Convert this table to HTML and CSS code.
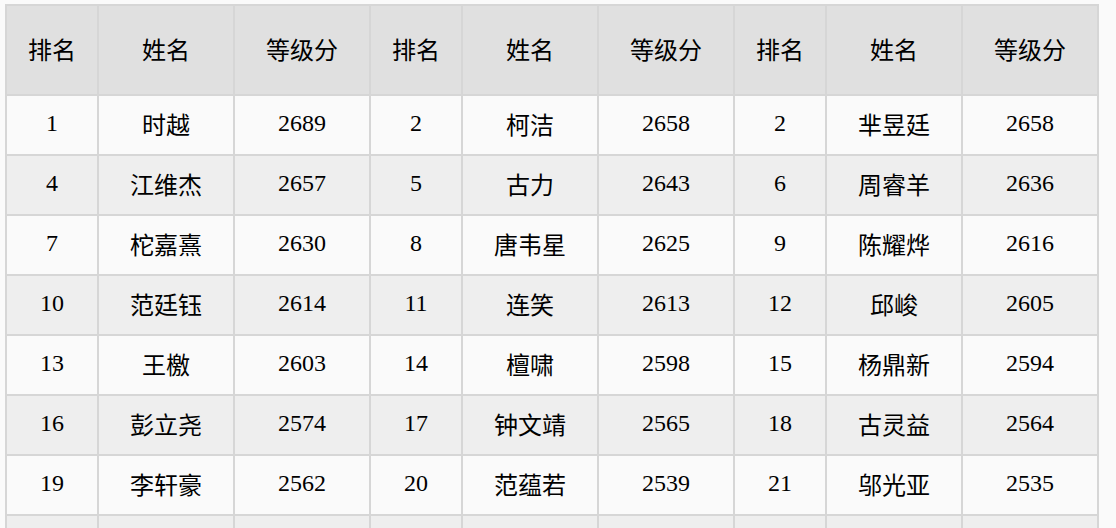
FILE: index.html
```html
<!DOCTYPE html>
<html lang="zh-CN">
<head>
<meta charset="utf-8">
<title>等级分排名</title>
<link rel="stylesheet" href="styles.css">
</head>
<body>
<table class="rank">
  <colgroup>
    <col class="c-rank"><col class="c-name"><col class="c-score">
    <col class="c-rank"><col class="c-name"><col class="c-score">
    <col class="c-rank"><col class="c-name"><col class="c-score">
  </colgroup>
  <thead>
    <tr><th>排名</th><th>姓名</th><th>等级分</th><th>排名</th><th>姓名</th><th>等级分</th><th>排名</th><th>姓名</th><th>等级分</th></tr>
  </thead>
  <tbody>
    <tr><td>1</td><td>时越</td><td>2689</td><td>2</td><td>柯洁</td><td>2658</td><td>2</td><td>芈昱廷</td><td>2658</td></tr>
    <tr><td>4</td><td>江维杰</td><td>2657</td><td>5</td><td>古力</td><td>2643</td><td>6</td><td>周睿羊</td><td>2636</td></tr>
    <tr><td>7</td><td>柁嘉熹</td><td>2630</td><td>8</td><td>唐韦星</td><td>2625</td><td>9</td><td>陈耀烨</td><td>2616</td></tr>
    <tr><td>10</td><td>范廷钰</td><td>2614</td><td>11</td><td>连笑</td><td>2613</td><td>12</td><td>邱峻</td><td>2605</td></tr>
    <tr><td>13</td><td>王檄</td><td>2603</td><td>14</td><td>檀啸</td><td>2598</td><td>15</td><td>杨鼎新</td><td>2594</td></tr>
    <tr><td>16</td><td>彭立尧</td><td>2574</td><td>17</td><td>钟文靖</td><td>2565</td><td>18</td><td>古灵益</td><td>2564</td></tr>
    <tr><td>19</td><td>李轩豪</td><td>2562</td><td>20</td><td>范蕴若</td><td>2539</td><td>21</td><td>邬光亚</td><td>2535</td></tr>
    <tr><td></td><td></td><td></td><td></td><td></td><td></td><td></td><td></td><td></td></tr>
  </tbody>
</table>
</body>
</html>
```
FILE: styles.css
```css
html, body {
  margin: 0;
  background: #fafafa;
}
body {
  padding: 4px 0 0 5px;
  font-family: "Liberation Serif", "Noto Sans CJK SC", serif;
  color: #000;
}
.rank {
  border-collapse: separate;
  border-spacing: 0;
  table-layout: fixed;
  width: 1094px;
  border-top: 2px solid #d6d6d6;
  border-left: 2px solid #d6d6d6;
  font-size: 24px;
}
.c-rank { width: 92px; }
.c-name { width: 136px; }
.c-score { width: 136px; }
.rank th,
.rank td {
  box-sizing: border-box;
  border-right: 2px solid #d6d6d6;
  border-bottom: 2px solid #d6d6d6;
  text-align: center;
  padding: 0 0 4px;
  font-weight: normal;
}
.rank th {
  height: 90px;
  background: #e0e0e0;
}
.rank td {
  height: 60px;
}
.rank tbody tr:nth-child(odd) td { background: #fafafa; }
.rank tbody tr:nth-child(even) td { background: #eeeeee; }
```
